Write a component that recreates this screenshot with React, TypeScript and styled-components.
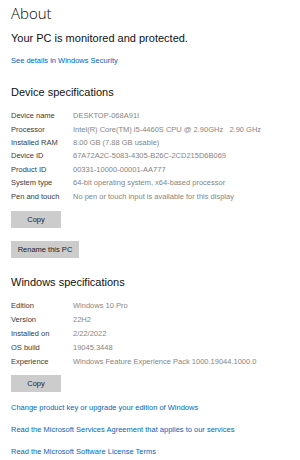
import React from 'react';
import styled, { createGlobalStyle } from 'styled-components';

const GlobalStyle = createGlobalStyle`
    html, body {
        margin: 0;
        padding: 0;
        background: #ffffff;
    }
    body {
        font-family: "Liberation Sans", Arial, sans-serif;
    }
`;

const Page = styled.div`
    width: 300px;
    height: 460px;
    overflow: hidden;
    padding: 0 11px;
    box-sizing: border-box;
    display: flex;
    flex-direction: column;
`;

const Title = styled.h1`
    margin: 3px 0 0;
    font-family: "Open Sans", sans-serif;
    font-size: 15px;
    font-weight: 300;
    line-height: 20px;
    color: #000;
`;

const Status = styled.div`
    margin-top: 7px;
    font-size: 11px;
    line-height: 16px;
    color: #111;
`;

const Link = styled.a<{ $gap?: number }>`
    display: block;
    margin-top: ${p => p.$gap ?? 0}px;
    font-size: 7.5px;
    line-height: 10px;
    color: #0067c0;
    text-decoration: none;
    cursor: pointer;
`;

const SectionTitle = styled.h2<{ $gap: number }>`
    margin: ${p => p.$gap}px 0 0;
    font-size: 11px;
    font-weight: 400;
    line-height: 16px;
    color: #111;
`;

const Specs = styled.dl<{ $row: number }>`
    margin: 9px 0 0;
    display: grid;
    grid-template-columns: 62px 1fr;
    grid-auto-rows: ${p => p.$row}px;
    align-items: center;
    font-size: 7.5px;
`;

const Label = styled.dt`
    color: #3a3a3a;
    white-space: nowrap;
`;

const Value = styled.dd`
    margin: 0;
    color: #858585;
    white-space: pre;
`;

const Button = styled.button<{ $gap: number; $width: number }>`
    display: block;
    margin-top: ${p => p.$gap}px;
    width: ${p => p.$width}px;
    height: 17px;
    padding: 0;
    border: none;
    background: #cccccc;
    color: #222;
    font-family: inherit;
    font-size: 7.5px;
    cursor: pointer;
`;

type Spec = [string, string];

const device: Spec[] = [
    ['Device name', 'DESKTOP-068A91I'],
    ['Processor', 'Intel(R) Core(TM) i5-4460S CPU @ 2.90GHz   2.90 GHz'],
    ['Installed RAM', '8.00 GB (7.88 GB usable)'],
    ['Device ID', '67A72A2C-5083-4305-B26C-2CD215D6B069'],
    ['Product ID', '00331-10000-00001-AA777'],
    ['System type', '64-bit operating system, x64-based processor'],
    ['Pen and touch', 'No pen or touch input is available for this display'],
];

const windows: Spec[] = [
    ['Edition', 'Windows 10 Pro'],
    ['Version', '22H2'],
    ['Installed on', '2/22/2022'],
    ['OS build', '19045.3448'],
    ['Experience', 'Windows Feature Experience Pack 1000.19044.1000.0'],
];

const SpecList = ({ items, row }: { items: Spec[]; row: number }) => (
    <Specs $row={row}>
        {items.map(([k, v]) => (
            <React.Fragment key={k}>
                <Label>{k}</Label>
                <Value>{v}</Value>
            </React.Fragment>
        ))}
    </Specs>
);

export default function App() {
    return (
        <>
            <GlobalStyle />
            <Page>
                <Title>About</Title>
                <Status>Your PC is monitored and protected.</Status>
                <Link $gap={10}>See details in Windows Security</Link>

                <SectionTitle $gap={18}>Device specifications</SectionTitle>
                <SpecList items={device} row={13.4} />
                <Button $gap={8} $width={50}>Copy</Button>
                <Button $gap={13} $width={68}>Rename this PC</Button>

                <SectionTitle $gap={16}>Windows specifications</SectionTitle>
                <SpecList items={windows} row={14} />
                <Button $gap={6} $width={50}>Copy</Button>

                <Link $gap={11}>Change product key or upgrade your edition of Windows</Link>
                <Link $gap={12}>Read the Microsoft Services Agreement that applies to our services</Link>
                <Link $gap={12}>Read the Microsoft Software License Terms</Link>
            </Page>
        </>
    );
}
